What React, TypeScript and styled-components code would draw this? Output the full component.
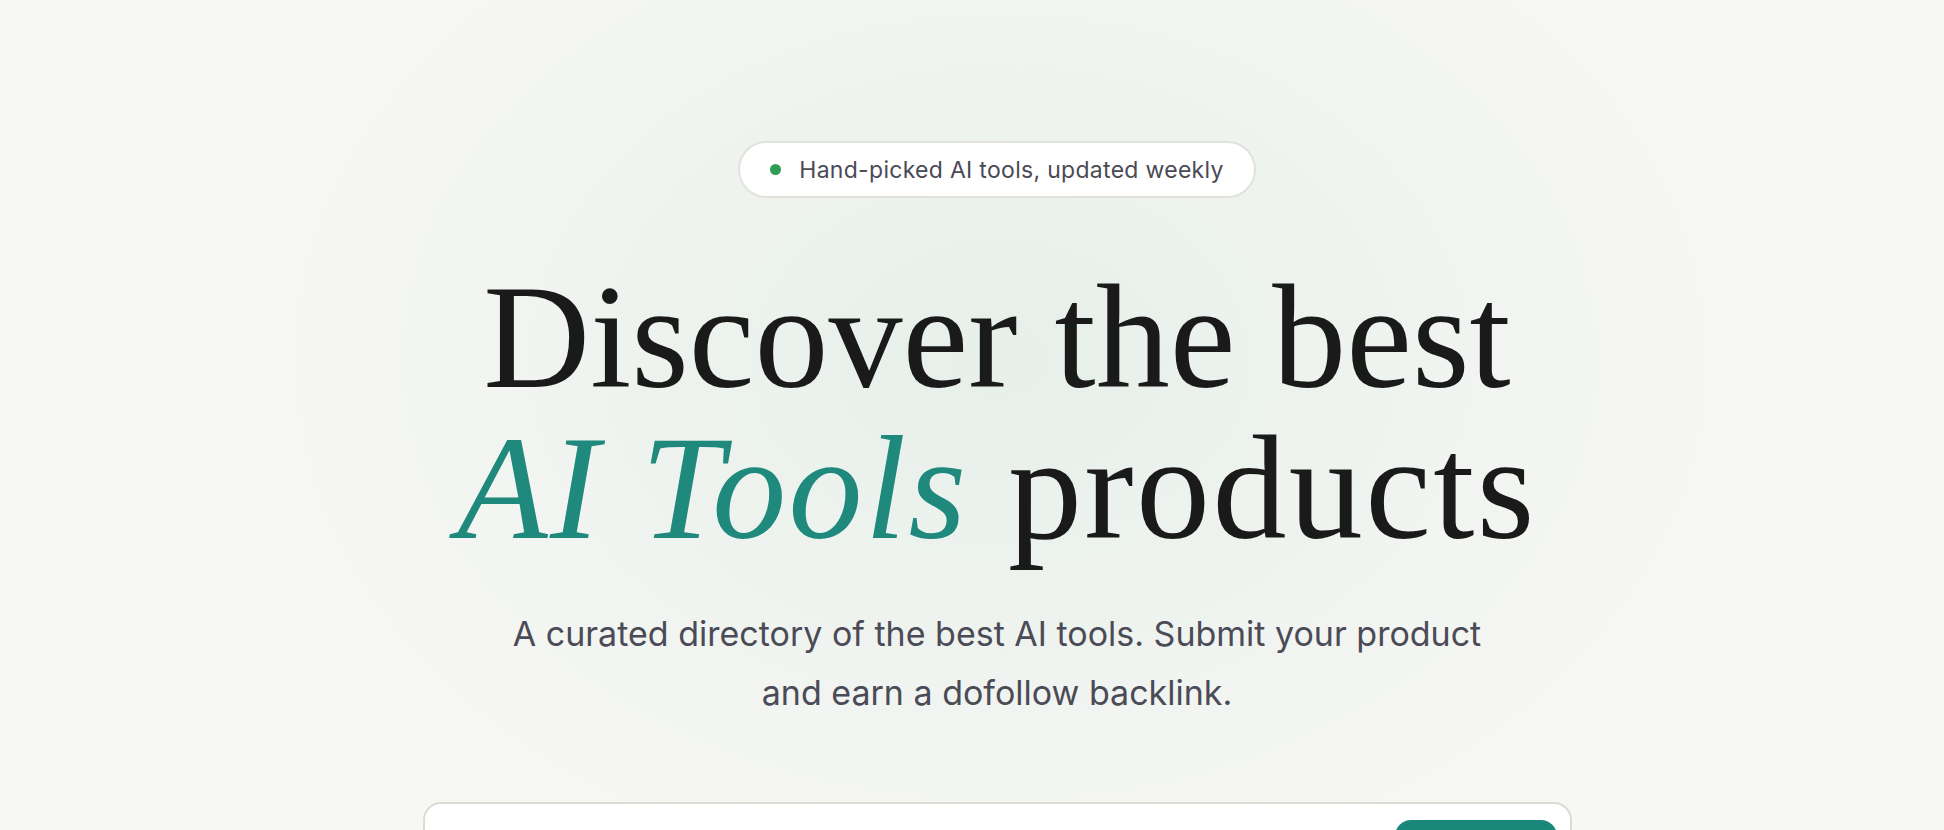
import styled, { createGlobalStyle } from 'styled-components';

const GlobalStyle = createGlobalStyle`
html, body {
    margin: 0;
    padding: 0;
    height: 100%;
    overflow: hidden;
}
body {
    background: #f7f7f4;
    font-family: Inter, "Noto Sans", "Liberation Sans", sans-serif;
    -webkit-font-smoothing: antialiased;
}
`;

const Page = styled.main`
min-height: 830px;
background:
    radial-gradient(ellipse 760px 560px at 1000px 360px, rgba(228, 238, 232, 0.85), rgba(247, 247, 244, 0) 100%),
    #f7f7f4;
display: flex;
flex-direction: column;
align-items: center;
padding: 141px 0 0 50px;
box-sizing: border-box;
`;

const Badge = styled.div`
display: flex;
align-items: center;
gap: 18px;
height: 57px;
box-sizing: border-box;
padding: 0 30px 0 30px;
background: #ffffff;
border: 2px solid #e2e2dd;
border-radius: 999px;
font-size: 23px;
color: #4a4a55;
letter-spacing: 0.3px;
`;

const Dot = styled.span<{ color: string }>`
width: 11px;
height: 11px;
border-radius: 50%;
background: ${(props) => props.color};
`;

const Title = styled.h1`
margin: 64px 0 0;
font-family: "Liberation Serif", "Times New Roman", serif;
font-weight: 400;
font-size: 148px;
line-height: 151px;
color: #1a1a1a;
text-align: center;
`;

const TitleLine = styled.span<{ spacing: number }>`
display: block;
letter-spacing: ${(props) => props.spacing}px;
`;

const Accent = styled.em`
font-style: italic;
color: #1e897c;
`;

const Lead = styled.p`
margin: 40px 0 0;
max-width: 1040px;
font-size: 34px;
line-height: 59px;
color: #4b4b57;
text-align: center;
`;

const SearchBox = styled.form`
margin-top: 80px;
width: 1149px;
height: 86px;
flex-shrink: 0;
box-sizing: border-box;
display: flex;
align-items: flex-start;
justify-content: space-between;
padding: 16px 13px 16px 28px;
background: #ffffff;
border: 2px solid #dcdcd6;
border-radius: 18px;
`;

const SearchInput = styled.input`
flex: 1;
border: none;
outline: none;
background: transparent;
height: 52px;
font-family: inherit;
font-size: 22px;
color: #1a1a1a;
`;

const SearchButton = styled.button`
width: 162px;
height: 52px;
border: none;
border-radius: 16px;
background: #1b877b;
color: #ffffff;
font-family: inherit;
font-size: 20px;
font-weight: 600;
`;

function App() {
    return (
        <>
            <GlobalStyle />
            <Page>
                <Badge>
                    <Dot color="#2f9e55" />
                    Hand-picked AI tools, updated weekly
                </Badge>
                <Title>
                    <TitleLine spacing={0}>Discover the best</TitleLine>
                    <TitleLine spacing={2.4}>
                        <Accent>AI Tools</Accent> products
                    </TitleLine>
                </Title>
                <Lead>
                    A curated directory of the best AI tools. Submit your product
                    <br />
                    and earn a dofollow backlink.
                </Lead>
                <SearchBox onSubmit={(e) => e.preventDefault()}>
                    <SearchInput aria-label="Search" />
                    <SearchButton type="submit">Search</SearchButton>
                </SearchBox>
            </Page>
        </>
    );
}

export default App;
